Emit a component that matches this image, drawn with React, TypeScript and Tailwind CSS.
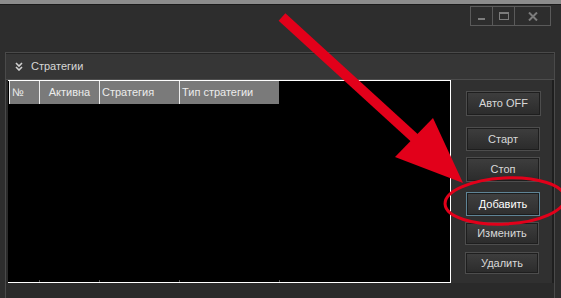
const columns = [
  { label: '№', w: 'w-[30px]', align: 'justify-start pl-[2px]' },
  { label: 'Активна', w: 'w-[60px]', align: 'justify-center' },
  { label: 'Стратегия', w: 'w-[80px]', align: 'justify-start pl-[2px]' },
  { label: 'Тип стратегии', w: 'w-[100px]', align: 'justify-start pl-[2px]' },
];

function WindowControls() {
  return (
    <div className="flex h-[20px] border border-[#5a5a5a] text-[#7c7c7c]">
      <div className="flex w-[22px] items-end justify-center border-r border-[#5a5a5a] pb-[5px]">
        <div className="h-[2px] w-[7px] bg-[#7c7c7c]" />
      </div>
      <div className="flex w-[22px] items-center justify-center border-r border-[#5a5a5a]">
        <div className="h-[8px] w-[10px] border border-[#7c7c7c] border-t-2" />
      </div>
      <div className="flex w-[35px] items-center justify-center">
        <svg width="10" height="9" viewBox="0 0 10 9">
          <path d="M1 0.5 L9 8.5 M9 0.5 L1 8.5" stroke="#7c7c7c" strokeWidth="2" />
        </svg>
      </div>
    </div>
  );
}

function Btn({ label, active, className }: { label: string; active?: boolean; className: string }) {
  return (
    <div
      className={
        'flex items-center justify-center border bg-gradient-to-b text-[11px] ' +
        (active
          ? 'border-[#5f8496] from-[#404040] to-[#2f2f2f] text-white shadow-[inset_0_0_0_1px_#1c1c1c] '
          : 'border-[#4d4d4d] from-[#3e3e3e] to-[#2b2b2b] text-[#d8d8d8] shadow-[inset_0_0_0_1px_#1e1e1e] ') +
        className
      }
    >
      {label}
    </div>
  );
}

export default function App() {
  return (
    <div
      className="relative flex h-[298px] w-[561px] flex-col overflow-hidden bg-[#2d2d2d]"
      style={{ fontFamily: '"Liberation Sans", "DejaVu Sans", sans-serif' }}
    >
      <div className="h-[4px] bg-[#8c8c8c]" />
      <div className="h-px bg-[#1b1b1b]" />
      <div className="flex h-[47px] items-start justify-end pr-[10px] pt-px">
        <WindowControls />
      </div>

      <div className="ml-[5px] flex w-[550px] flex-1 flex-col border-x border-t border-[#4a4a4a]">
        <div className="flex h-[26px] items-center gap-[8px] border-t border-[#242424] bg-[#363636] pl-[9px] text-[11px] text-[#d6d6d6]">
          <svg width="8" height="9" viewBox="0 0 8 9">
            <path d="M1 1 L4 4 L7 1 M1 5 L4 8 L7 5" stroke="#d0d0d0" strokeWidth="1.6" fill="none" />
          </svg>
          <span>Стратегии</span>
        </div>

        <div className="flex flex-1 flex-col bg-[#2a2a2a]">
          <div className="flex h-[204px] border-t border-[#4d4d4d]">
            <div className="ml-[2px] flex w-[443px] flex-col border-r border-b border-t border-white bg-black pl-px">
              <div className="flex h-[23px]">
                {columns.map((c) => (
                  <div
                    key={c.label}
                    className={`flex items-center border-l border-[#ececec] bg-[#7a7a7a] text-[11px] text-[#ececec] ${c.w} ${c.align}`}
                  >
                    {c.label}
                  </div>
                ))}
              </div>
              <div className="relative flex-1">
                <div className="absolute bottom-0 left-[30px] h-[2px] w-px bg-[#555]" />
                <div className="absolute bottom-0 left-[90px] h-[2px] w-px bg-[#555]" />
                <div className="absolute bottom-0 left-[170px] h-[2px] w-px bg-[#555]" />
                <div className="absolute bottom-0 left-[270px] h-[2px] w-px bg-[#555]" />
              </div>
            </div>

            <div className="flex flex-1 flex-col border-r-2 border-[#1e1e1e] bg-[#303030] pl-[15px]">
              <Btn label="Авто OFF" className="mt-[11px] h-[25px] w-[75px]" />
              <Btn label="Старт" className="mt-[11px] h-[24px] w-[74px]" />
              <Btn label="Стоп" className="mt-[6px] h-[25px] w-[74px]" />
              <Btn label="Добавить" active className="mt-[10px] h-[24px] w-[74px]" />
              <Btn label="Изменить" className="-ml-px mt-[6px] h-[23px] w-[74px]" />
              <Btn label="Удалить" className="-ml-px mt-[7px] h-[22px] w-[74px]" />
            </div>
          </div>
        </div>
      </div>

      <svg className="pointer-events-none absolute left-0 top-0" width="561" height="298" viewBox="0 0 561 298">
        <line x1="282" y1="17" x2="420" y2="143" stroke="#e2001a" strokeWidth="10" />
        <polygon points="433,118 395,157 463,183" fill="#e2001a" />
        <ellipse
          cx="505"
          cy="201"
          rx="60"
          ry="23"
          fill="none"
          stroke="#e2001a"
          strokeWidth="3"
          transform="rotate(-3 505 201)"
        />
      </svg>
    </div>
  );
}
